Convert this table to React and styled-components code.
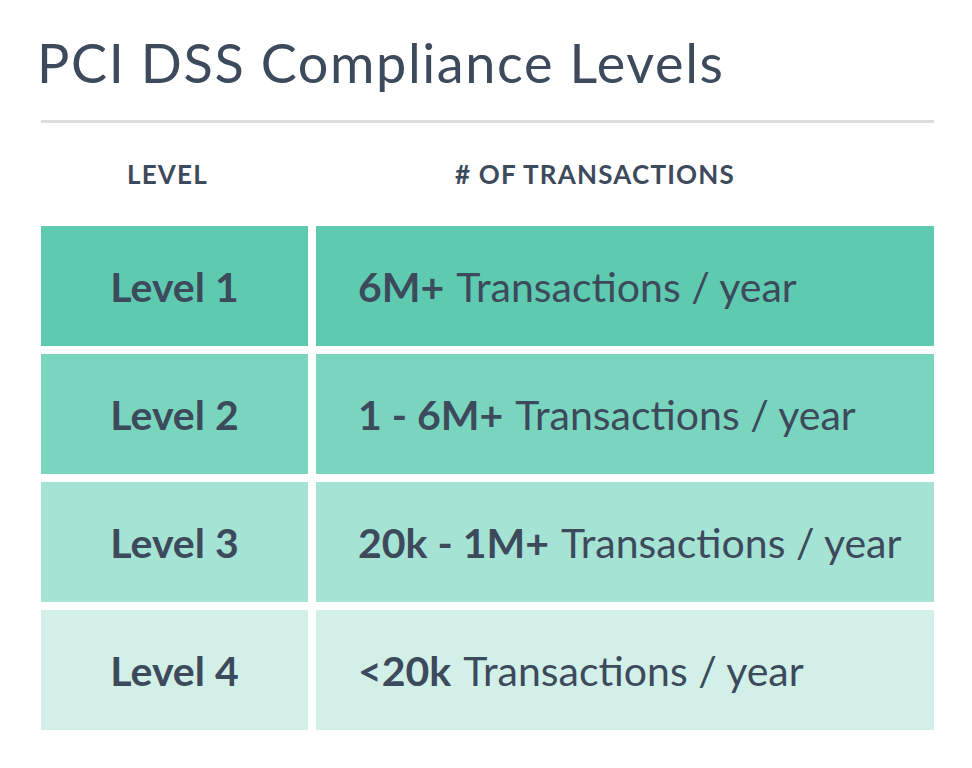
import React from 'react'
import styled, { createGlobalStyle } from 'styled-components'

const GlobalStyle = createGlobalStyle`
  body {
    margin: 0;
    background: #ffffff;
    font-family: 'Lato', 'Noto Sans', sans-serif;
    color: #3d4a5c;
  }
`

const Page = styled.div`
  width: 972px;
  padding: 28px 38px 0 41px;
  box-sizing: border-box;
`

const Title = styled.h1`
  margin: 0 0 0 -4px;
  font-size: 54px;
  font-weight: 400;
  line-height: 70px;
  letter-spacing: 1.6px;
`

const Divider = styled.hr`
  border: none;
  height: 3px;
  background: #dddddd;
  margin: 22px 0 0 0;
`

const Table = styled.div`
  display: grid;
  grid-template-columns: 267px 618px;
  column-gap: 8px;
  row-gap: 8px;
`

const HeadCell = styled.div`
  height: 95px;
  display: flex;
  align-items: center;
  justify-content: center;
  padding: 6px ${(p) => p.shift}px 0 0;
  box-sizing: border-box;
  font-size: 26px;
  font-weight: 700;
  letter-spacing: 1.2px;
`

const Cell = styled.div`
  height: 120px;
  display: flex;
  align-items: center;
  justify-content: ${(p) => (p.center ? 'center' : 'flex-start')};
  padding-left: ${(p) => (p.center ? '0' : '42px')};
  background: ${(p) => p.bg};
  font-size: 41px;
  font-weight: ${(p) => (p.center ? 700 : 400)};
  box-sizing: border-box;
`

const Strong = styled.b`
  font-weight: 700;
  margin-right: 12px;
`

const rows = [
  { level: 'Level 1', amount: '6M+', bg: '#5ecbb0' },
  { level: 'Level 2', amount: '1 - 6M+', bg: '#7ad5bf' },
  { level: 'Level 3', amount: '20k - 1M+', bg: '#a5e3d4' },
  { level: 'Level 4', amount: '<20k', bg: '#d2f0e8' },
]

const App = () => {
  return (
    <Page>
      <GlobalStyle />
      <Title>PCI DSS Compliance Levels</Title>
      <Divider />
      <Table>
        <HeadCell shift={14}>LEVEL</HeadCell>
        <HeadCell shift={60}># OF TRANSACTIONS</HeadCell>
        {rows.map((row) => (
          <React.Fragment key={row.level}>
            <Cell center bg={row.bg}>{row.level}</Cell>
            <Cell bg={row.bg}>
              <Strong>{row.amount}</Strong>Transactions / year
            </Cell>
          </React.Fragment>
        ))}
      </Table>
    </Page>
  )
}

export default App
